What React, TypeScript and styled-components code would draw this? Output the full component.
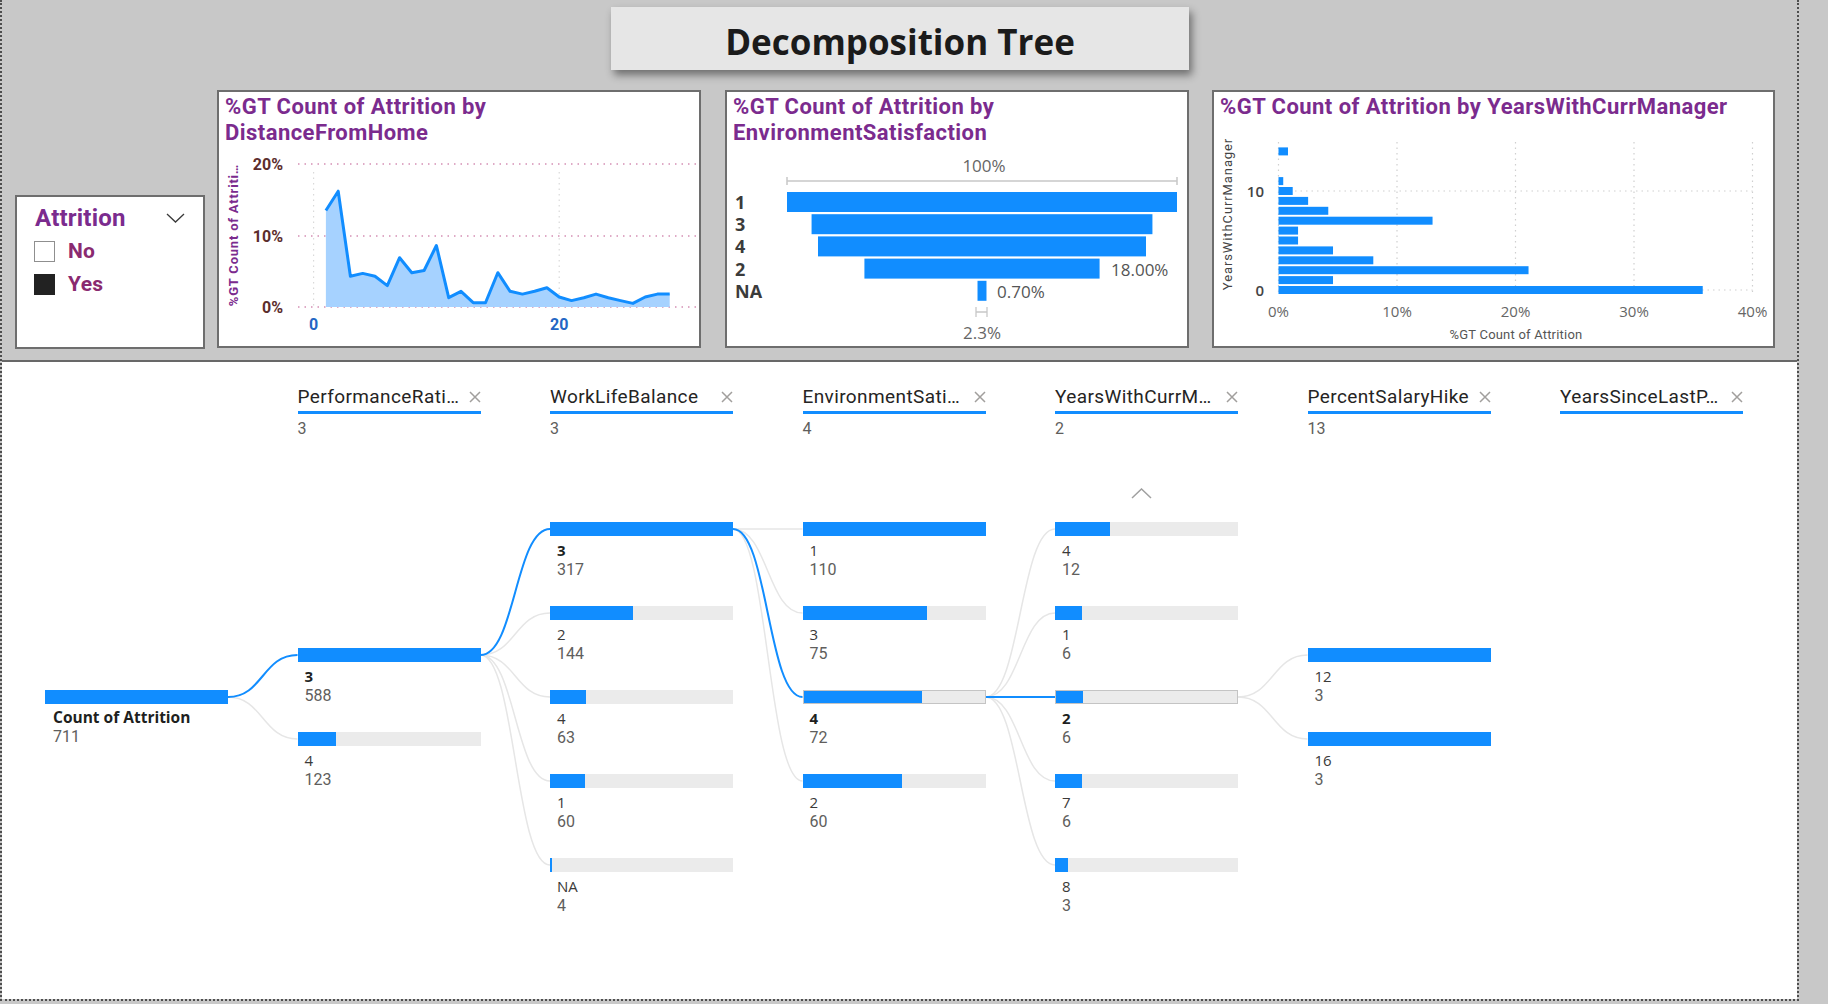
import React from "react";
import styled, { createGlobalStyle } from "styled-components";

const BLUE = "#118dff";
const PURPLE = "#7b2b8e";
const DIN = "Roboto, 'Liberation Sans', sans-serif";
const SEGOE = "'Open Sans', 'Liberation Sans', sans-serif";

const GlobalStyle = createGlobalStyle`
  html, body { margin: 0; padding: 0; }
  body { background: #c8c8c8; font-family: ${SEGOE}; overflow: hidden; }
`;

const Page = styled.div`
  width: 1828px;
  height: 1004px;
  background: #c8c8c8;
`;

const Canvas = styled.div`
  box-sizing: border-box;
  width: 1799px;
  height: 1001px;
  border-left: 2px dotted #4e4e4e;
  border-right: 2px dotted #4e4e4e;
  border-bottom: 2px dotted #4e4e4e;
  display: flex;
  flex-direction: column;
`;

const TopArea = styled.div`
  height: 360px;
  flex: none;
  display: flex;
  flex-direction: column;
`;

const TitleBox = styled.div`
  box-sizing: border-box;
  margin: 7px 0 0 609px;
  width: 578px;
  height: 63px;
  padding-top: 5px;
  background: #e6e6e6;
  box-shadow: 3px 5px 8px rgba(0, 0, 0, 0.45);
  display: flex;
  align-items: center;
  justify-content: center;
  font: 700 35px ${SEGOE};
  color: #1b1b1b;
`;

const PanelRow = styled.div`
  margin-top: 20px;
  height: 259px;
  padding-left: 13px;
  display: flex;
  align-items: flex-end;
`;

const Panel = styled.div<{ $w: number; $ml: number }>`
  box-sizing: border-box;
  width: ${(p) => p.$w}px;
  height: 258px;
  margin-left: ${(p) => p.$ml}px;
  margin-bottom: 1px;
  border: 2px solid #6e6e6e;
  background: #fff;
  display: flex;
  flex-direction: column;
`;

const ChartTitle = styled.div`
  padding: 2px 6px 0;
  font: 700 22px/26px ${DIN};
  letter-spacing: 0.45px;
  color: ${PURPLE};
  white-space: nowrap;
`;

const PlotSvg = styled.svg`
  display: block;
  flex: none;
`;

const SvgText = styled.text<{ $size: number; $weight?: number; $color: string; $font?: "din" | "segoe"; $ls?: number }>`
  font-family: ${(p) => (p.$font === "segoe" ? SEGOE : DIN)};
  font-size: ${(p) => p.$size}px;
  font-weight: ${(p) => p.$weight ?? 400};
  letter-spacing: ${(p) => p.$ls ?? 0}px;
  fill: ${(p) => p.$color};
`;

/* ---------- slicer ---------- */
const SlicerBox = styled.div`
  box-sizing: border-box;
  width: 190px;
  height: 154px;
  border: 2px solid #6e6e6e;
  background: #fff;
  padding: 7px 18px 0 18px;
`;

const SlicerHeader = styled.div`
  display: flex;
  justify-content: space-between;
  align-items: center;
  font: 700 24px/28px ${DIN};
  letter-spacing: 0.2px;
  color: ${PURPLE};
`;

const SlicerItems = styled.div`
  margin-top: 9px;
  display: flex;
  flex-direction: column;
  gap: 12px;
`;

const SlicerItem = styled.div`
  display: flex;
  align-items: center;
  gap: 13px;
  height: 21px;
  margin-left: -1px;
  font: 700 21px/21px ${DIN};
  letter-spacing: 0.3px;
  color: #8a2a70;
`;

const Check = styled.span<{ $on?: boolean }>`
  box-sizing: border-box;
  width: 21px;
  height: 21px;
  border: 1px solid ${(p) => (p.$on ? "#222" : "#8f8f8f")};
  background: ${(p) => (p.$on ? "#222" : "#fff")};
`;

/* ---------- decomposition tree ---------- */
const TreeVisual = styled.div`
  flex: 1;
  background: #fff;
  border-top: 2px solid #686868;
  padding: 24px 0 0 43px;
`;

const TreeBody = styled.div`
  position: relative;
  z-index: 0;
  display: flex;
  gap: 69.5px;
  align-items: flex-start;
`;

const Connectors = styled.svg`
  position: absolute;
  left: 0;
  top: 0;
  z-index: -1;
  overflow: visible;
`;

const Column = styled.div`
  width: 183px;
  flex: none;
  display: flex;
  flex-direction: column;
`;

const HeaderArea = styled.div`
  height: 101px;
`;

const HeaderRow = styled.div`
  display: flex;
  align-items: center;
  justify-content: space-between;
  height: 22px;
  padding-bottom: 3px;
  border-bottom: 3px solid ${BLUE};
  font: 400 19px/22px ${DIN};
  letter-spacing: 0.4px;
  color: #252423;
  white-space: nowrap;
`;

const HeaderCount = styled.div`
  margin-top: 5px;
  font: 400 16px/19px ${DIN};
  color: #605e5c;
`;

const NodeList = styled.div<{ $offset: number }>`
  position: relative;
  padding-top: ${(p) => p.$offset * 84}px;
`;

const Node = styled.div`
  height: 84px;
  box-sizing: border-box;
  padding-top: 35px;
`;

const Bar = styled.div<{ $outlined?: boolean }>`
  height: 14px;
  box-sizing: border-box;
  background: #ebebeb;
  display: flex;
  border: ${(p) => (p.$outlined ? "1px solid #c4c4c4" : "none")};
`;

const BarFill = styled.div`
  height: 100%;
  background: ${BLUE};
`;

const NodeLabel = styled.div<{ $selected?: boolean; $root?: boolean }>`
  margin-top: ${(p) => (p.$root ? 4 : 5)}px;
  padding-left: ${(p) => (p.$root ? 8 : 7)}px;
  font-family: ${SEGOE};
  font-size: ${(p) => (p.$root ? 15.5 : 15)}px;
  line-height: 19px;
  font-weight: ${(p) => (p.$selected ? 700 : 400)};
  color: ${(p) => (p.$selected ? "#201f1e" : "#3b3a39")};
`;

const NodeValue = styled.div<{ $root?: boolean }>`
  padding-left: ${(p) => (p.$root ? 8 : 7)}px;
  font: 400 16px/19px ${DIN};
  color: #605e5c;
`;

const ScrollUp = styled.svg`
  position: absolute;
  top: 1px;
  left: 76px;
`;

/* ---------- data ---------- */
type TNode = { label: string; value: number; fill: number; selected?: boolean; outlined?: boolean };
type Level = { title?: string; count?: number; offset: number; nodes: TNode[]; chevron?: boolean };

const levels: Level[] = [
  { offset: 2, nodes: [{ label: "Count of Attrition", value: 711, fill: 1, selected: true }] },
  {
    title: "PerformanceRati…",
    count: 3,
    offset: 1.5,
    nodes: [
      { label: "3", value: 588, fill: 1, selected: true },
      { label: "4", value: 123, fill: 123 / 588 },
    ],
  },
  {
    title: "WorkLifeBalance",
    count: 3,
    offset: 0,
    nodes: [
      { label: "3", value: 317, fill: 1, selected: true },
      { label: "2", value: 144, fill: 144 / 317 },
      { label: "4", value: 63, fill: 63 / 317 },
      { label: "1", value: 60, fill: 60 / 317 },
      { label: "NA", value: 4, fill: 0.013 },
    ],
  },
  {
    title: "EnvironmentSati…",
    count: 4,
    offset: 0,
    nodes: [
      { label: "1", value: 110, fill: 1 },
      { label: "3", value: 75, fill: 75 / 110 },
      { label: "4", value: 72, fill: 72 / 110, selected: true, outlined: true },
      { label: "2", value: 60, fill: 60 / 110 },
    ],
  },
  {
    title: "YearsWithCurrM…",
    count: 2,
    offset: 0,
    chevron: true,
    nodes: [
      { label: "4", value: 12, fill: 0.3 },
      { label: "1", value: 6, fill: 0.148 },
      { label: "2", value: 6, fill: 0.148, selected: true, outlined: true },
      { label: "7", value: 6, fill: 0.148 },
      { label: "8", value: 3, fill: 0.071 },
    ],
  },
  {
    title: "PercentSalaryHike",
    count: 13,
    offset: 1.5,
    nodes: [
      { label: "12", value: 3, fill: 1 },
      { label: "16", value: 3, fill: 1 },
    ],
  },
  { title: "YearsSinceLastP…", offset: 0, nodes: [] },
];

const PITCH = 252.5;
const COLW = 183;
const slotY = (offset: number, k: number) => 101 + (offset + k) * 84 + 42;

function buildConnectors() {
  const grey: string[] = [];
  const blue: string[] = [];
  for (let i = 1; i < levels.length; i++) {
    const parentLevel = levels[i - 1];
    const pIdx = parentLevel.nodes.findIndex((n) => n.selected);
    if (pIdx < 0) continue;
    const x1 = (i - 1) * PITCH + COLW;
    const y1 = slotY(parentLevel.offset, pIdx);
    const x2 = i * PITCH;
    levels[i].nodes.forEach((n, k) => {
      const y2 = slotY(levels[i].offset, k);
      const mx = (x1 + x2) / 2;
      const d = `M${x1} ${y1} C${mx} ${y1} ${mx} ${y2} ${x2} ${y2}`;
      (n.selected ? blue : grey).push(d);
    });
  }
  return { grey, blue };
}

const distance = [13.5, 16.2, 4.3, 4.7, 4.3, 3.0, 6.9, 4.8, 5.1, 8.6, 1.3, 2.2, 0.6, 0.6, 4.8, 2.2, 1.8, 2.2, 2.7, 1.4, 0.9, 1.3, 1.8, 1.3, 0.9, 0.5, 1.4, 1.8, 1.8];

const years: [number, number][] = [
  [0, 35.8], [1, 4.6], [2, 21.1], [3, 8.0], [4, 4.6], [5, 1.65], [6, 1.65], [7, 13.0], [8, 4.2], [9, 2.5], [10, 1.2], [11, 0.4], [14, 0.8],
];

const funnel = [
  { label: "1", pct: 1 },
  { label: "3", pct: 0.874 },
  { label: "4", pct: 0.841 },
  { label: "2", pct: 0.603 },
  { label: "NA", pct: 0.023 },
];

/* ---------- icons ---------- */
const CloseX = () => (
  <svg width="12" height="12" viewBox="0 0 12 12">
    <path d="M1 1 L11 11 M11 1 L1 11" stroke="#a19f9d" strokeWidth="1.5" fill="none" />
  </svg>
);

const ChevronDown = () => (
  <svg width="19" height="10" viewBox="0 0 19 10">
    <path d="M1 1 L9.5 9 L18 1" stroke="#3a3a3a" strokeWidth="1.3" fill="none" />
  </svg>
);

/* ---------- charts ---------- */
const DistanceChart = () => {
  const x0 = 94.6;
  const px = 12.28;
  const y0 = 161;
  const py = 7.15;
  const pts = distance.map((v, i) => [x0 + (i + 1) * px, y0 - v * py]);
  const line = pts.map((p, i) => `${i ? "L" : "M"}${p[0].toFixed(1)} ${p[1].toFixed(1)}`).join(" ");
  const area = `${line} L${pts[pts.length - 1][0]} ${y0} L${pts[0][0]} ${y0} Z`;
  return (
    <PlotSvg width={480} height={199} viewBox="0 0 480 199">
      {[18, 90, 161].map((y) => (
        <line key={y} x1={79} x2={478} y1={y} y2={y} stroke="#d58fb4" strokeWidth="1.5" strokeDasharray="1.5 5" />
      ))}
      {[x0, x0 + 20 * px].map((x) => (
        <line key={x} x1={x} x2={x} y1={26} y2={161} stroke="#d9d9d9" strokeWidth="1.2" strokeDasharray="1.5 4" />
      ))}
      <path d={area} fill="#a6d2ff" />
      <path d={line} fill="none" stroke={BLUE} strokeWidth="3" strokeLinejoin="round" />
      {[
        ["20%", 18],
        ["10%", 90],
        ["0%", 161],
      ].map(([t, y]) => (
        <SvgText key={t} x={64} y={y as number} textAnchor="end" dominantBaseline="central" $size={16} $weight={700} $color="#5c2d2d">
          {t}
        </SvgText>
      ))}
      <SvgText x={x0} y={178} textAnchor="middle" dominantBaseline="central" $size={16} $weight={700} $color="#2466c4">
        0
      </SvgText>
      <SvgText x={x0 + 20 * px} y={178} textAnchor="middle" dominantBaseline="central" $size={16} $weight={700} $color="#2466c4">
        20
      </SvgText>
      <SvgText
        x={0}
        y={0}
        transform="translate(14 89) rotate(-90)"
        textAnchor="middle"
        dominantBaseline="central"
        $size={13}
        $weight={700}
        $ls={0.8}
        $color={PURPLE}
      >
        %GT Count of Attriti…
      </SvgText>
    </PlotSvg>
  );
};

const FunnelChart = () => {
  const cx = 255;
  const full = 390;
  return (
    <PlotSvg width={460} height={199} viewBox="0 0 460 199">
      <SvgText x={cx + 2} y={19} textAnchor="middle" dominantBaseline="central" $size={17} $color="#666" $font="segoe">
        100%
      </SvgText>
      <path d="M60 35 L450 35 M60 31 L60 39 M450 31 L450 39" stroke="#c8c8c8" strokeWidth="1.5" fill="none" />
      {funnel.map((f, i) => {
        const w = f.pct * full;
        const top = 46 + i * 22.2;
        return (
          <g key={f.label}>
            <rect x={cx - w / 2} y={top} width={w} height={20} fill={BLUE} />
            <SvgText x={8} y={top + 10} dominantBaseline="central" $size={18} $weight={700} $color="#3b3b3b" $font="segoe">
              {f.label}
            </SvgText>
          </g>
        );
      })}
      <SvgText x={384} y={123} dominantBaseline="central" $size={17} $color="#555" $font="segoe">
        18.00%
      </SvgText>
      <SvgText x={270} y={145} dominantBaseline="central" $size={17} $color="#555" $font="segoe">
        0.70%
      </SvgText>
      <path d="M249 161 L249 171 M260 161 L260 171 M249 166 L260 166" stroke="#c8c8c8" strokeWidth="1.3" fill="none" />
      <SvgText x={cx} y={186} textAnchor="middle" dominantBaseline="central" $size={17} $color="#666" $font="segoe">
        2.3%
      </SvgText>
    </PlotSvg>
  );
};

const YearsChart = () => {
  const x0 = 64.5;
  const px = 11.85;
  const yAt = (v: number) => 170 - v * 9.9;
  return (
    <PlotSvg width={559} height={225} viewBox="0 0 559 225">
      {[0, 1, 2, 3, 4].map((k) => (
        <line key={k} x1={x0 + k * 118.5} x2={x0 + k * 118.5} y1={22} y2={174} stroke="#cfcfcf" strokeWidth="1.2" strokeDasharray="1.5 4" />
      ))}
      {[yAt(10), yAt(0)].map((y) => (
        <line key={y} x1={x0} x2={x0 + 474} y1={y} y2={y} stroke="#cfcfcf" strokeWidth="1.2" strokeDasharray="1.5 4" />
      ))}
      {years.map(([y, v]) => (
        <rect key={y} x={x0} y={yAt(y) - 4} width={v * px} height={8} fill={BLUE} />
      ))}
      <SvgText x={50} y={yAt(10)} textAnchor="end" dominantBaseline="central" $size={15} $weight={600} $color="#444" $font="segoe">
        10
      </SvgText>
      <SvgText x={50} y={yAt(0)} textAnchor="end" dominantBaseline="central" $size={15} $weight={600} $color="#444" $font="segoe">
        0
      </SvgText>
      {[0, 10, 20, 30, 40].map((t, k) => (
        <SvgText key={t} x={x0 + k * 118.5} y={191} textAnchor="middle" dominantBaseline="central" $size={15} $color="#666" $font="segoe">
          {t}%
        </SvgText>
      ))}
      <SvgText x={302} y={214} textAnchor="middle" dominantBaseline="central" $size={13} $ls={0.2} $color="#555">
        %GT Count of Attrition
      </SvgText>
      <SvgText
        x={0}
        y={0}
        transform="translate(13 94) rotate(-90)"
        textAnchor="middle"
        dominantBaseline="central"
        $size={13}
        $ls={0.9}
        $color="#444"
      >
        YearsWithCurrManager
      </SvgText>
    </PlotSvg>
  );
};

/* ---------- app ---------- */
export default function App() {
  const { grey, blue } = buildConnectors();
  return (
    <Page>
      <GlobalStyle />
      <Canvas>
        <TopArea>
          <TitleBox>Decomposition Tree</TitleBox>
          <PanelRow>
            <SlicerBox>
              <SlicerHeader>
                <span>Attrition</span>
                <ChevronDown />
              </SlicerHeader>
              <SlicerItems>
                <SlicerItem>
                  <Check />
                  No
                </SlicerItem>
                <SlicerItem>
                  <Check $on />
                  Yes
                </SlicerItem>
              </SlicerItems>
            </SlicerBox>
            <Panel $w={484} $ml={12}>
              <ChartTitle>
                %GT Count of Attrition by
                <br />
                DistanceFromHome
              </ChartTitle>
              <DistanceChart />
            </Panel>
            <Panel $w={464} $ml={24}>
              <ChartTitle>
                %GT Count of Attrition by
                <br />
                EnvironmentSatisfaction
              </ChartTitle>
              <FunnelChart />
            </Panel>
            <Panel $w={563} $ml={23}>
              <ChartTitle>%GT Count of Attrition by YearsWithCurrManager</ChartTitle>
              <YearsChart />
            </Panel>
          </PanelRow>
        </TopArea>
        <TreeVisual>
          <TreeBody>
            <Connectors width={1700} height={600}>
              {grey.map((d, i) => (
                <path key={`g${i}`} d={d} fill="none" stroke="#e6e6e6" strokeWidth="1.5" />
              ))}
              {blue.map((d, i) => (
                <path key={`b${i}`} d={d} fill="none" stroke={BLUE} strokeWidth="2" />
              ))}
            </Connectors>
            {levels.map((lvl, li) => (
              <Column key={li}>
                <HeaderArea>
                  {lvl.title && (
                    <>
                      <HeaderRow>
                        <span>{lvl.title}</span>
                        <CloseX />
                      </HeaderRow>
                      {lvl.count !== undefined && <HeaderCount>{lvl.count}</HeaderCount>}
                    </>
                  )}
                </HeaderArea>
                <NodeList $offset={lvl.offset}>
                  {lvl.chevron && (
                    <ScrollUp width="21" height="11" viewBox="0 0 21 11">
                      <path d="M1 10 L10.5 1 L20 10" stroke="#a0a0a0" strokeWidth="1.5" fill="none" />
                    </ScrollUp>
                  )}
                  {lvl.nodes.map((n, k) => (
                    <Node key={k}>
                      <Bar $outlined={n.outlined}>
                        <BarFill style={{ width: `${n.fill * 100}%` }} />
                      </Bar>
                      <NodeLabel $selected={n.selected} $root={li === 0}>
                        {n.label}
                      </NodeLabel>
                      <NodeValue $root={li === 0}>{n.value}</NodeValue>
                    </Node>
                  ))}
                </NodeList>
              </Column>
            ))}
          </TreeBody>
        </TreeVisual>
      </Canvas>
    </Page>
  );
}
